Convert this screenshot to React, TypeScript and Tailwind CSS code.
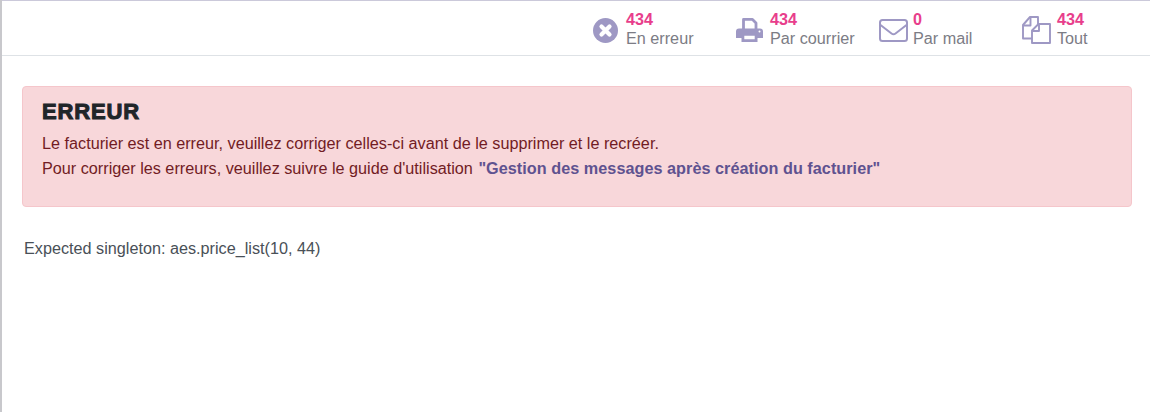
const ErrorIcon = ({ className }: { className?: string }) => (
  <svg className={className} viewBox="0 0 25 25">
    <circle cx="12.5" cy="12.5" r="12.5" fill="currentColor" />
    <path d="M8.5 8.5L16.5 16.5M16.5 8.5L8.5 16.5" stroke="#fff" strokeWidth="4.2" strokeLinecap="round" />
  </svg>
)

const PrintIcon = ({ className }: { className?: string }) => (
  <svg className={className} viewBox="0 0 27 24">
    <path d="M7.5 12V1.4H16.5L20 4.9V12" fill="#fff" stroke="currentColor" strokeWidth="2.8" strokeLinejoin="round" />
    <path d="M3 10.5H24A3 3 0 0 1 27 13.5V20H0V13.5A3 3 0 0 1 3 10.5Z" fill="currentColor" />
    <path d="M6.9 16.4H20.1V22.6H6.9Z" fill="#fff" stroke="currentColor" strokeWidth="2.8" />
    <circle cx="23.5" cy="13.5" r="1" fill="#fff" />
  </svg>
)

const MailIcon = ({ className }: { className?: string }) => (
  <svg className={className} viewBox="0 0 29 23" fill="none" stroke="currentColor" strokeWidth="2">
    <rect x="1" y="1" width="27" height="21" rx="2.5" />
    <path d="M1.5 6L12.5 14.5Q14.5 16 16.5 14.5L27.5 6" />
  </svg>
)

const FilesIcon = ({ className }: { className?: string }) => (
  <svg className={className} viewBox="0 0 29 28" fill="none" stroke="currentColor" strokeWidth="1.9" strokeLinejoin="round">
    <path d="M10 22.5H1V9L8 1H16V8" />
    <path d="M1.5 9.5H8.5V1.5" />
    <path d="M10 27V14.5L16.5 8H28V27Z" />
    <path d="M10.5 15H17V8.5" />
  </svg>
)

const stats = [
  { id: 'err', count: '434', label: 'En erreur', width: 'w-[143px]', iconBox: 'w-[33px]', icon: <ErrorIcon className="w-[25px] h-[25px] text-[#9e98c4]" /> },
  { id: 'post', count: '434', label: 'Par courrier', width: 'w-[143px]', iconBox: 'w-[34px]', icon: <PrintIcon className="w-[27px] h-[24px] text-[#9e98c4]" /> },
  { id: 'mail', count: '0', label: 'Par mail', width: 'w-[143px]', iconBox: 'w-[34px]', icon: <MailIcon className="w-[29px] h-[23px] text-[#9e98c4]" /> },
  { id: 'all', count: '434', label: 'Tout', width: 'w-[128px]', iconBox: 'w-[35px]', icon: <FilesIcon className="w-[29px] h-[28px] text-[#9e98c4]" /> },
]

export default function App() {
  return (
    <div className="h-[412px] overflow-hidden bg-white border-l-2 border-l-[#c8c8cc] font-['Liberation_Sans',Arial,sans-serif] text-[16.22px]">
      {/* Header */}
      <div className="flex justify-end h-[56px] border-t border-t-[#cbc9da] border-b border-b-[#dee2e6]">
        {stats.map((stat) => (
          <div key={stat.id} className={`flex items-center ${stat.width}`}>
            <div className={`${stat.iconBox} shrink-0 flex items-center mt-[4px]`}>{stat.icon}</div>
            <div className="flex flex-col gap-[1px] mt-[1px]">
              <span className="text-[#e83e8c] font-bold leading-[18px]">{stat.count}</span>
              <span className="text-[#7c7c85] leading-[19px]">{stat.label}</span>
            </div>
          </div>
        ))}
      </div>

      {/* Alert */}
      <div className="mt-[30px] ml-[20px] mr-[18px] h-[121px] px-[19px] pt-[12px] bg-[#f8d7da] border border-[#f5c6cb] rounded-[4px] text-[#721c24]">
        <h4 className="text-[#212529] text-[22px] font-bold leading-[26px] mb-[6px] [-webkit-text-stroke:1px_#212529] tracking-[0.85px]">ERREUR</h4>
        <p className="leading-[25px]">Le facturier est en erreur, veuillez corriger celles-ci avant de le supprimer et le recréer.</p>
        <p className="leading-[25px]">
          Pour corriger les erreurs, veuillez suivre le guide d'utilisation{' '}
          <b className="ml-[1px] text-[#5f5290] tracking-[0.04px]">"Gestion des messages après création du facturier"</b>
        </p>
      </div>

      <p className="mt-[31px] ml-[22px] text-[#495057] leading-[20px]">Expected singleton: aes.price_list(10, 44)</p>
    </div>
  )
}
